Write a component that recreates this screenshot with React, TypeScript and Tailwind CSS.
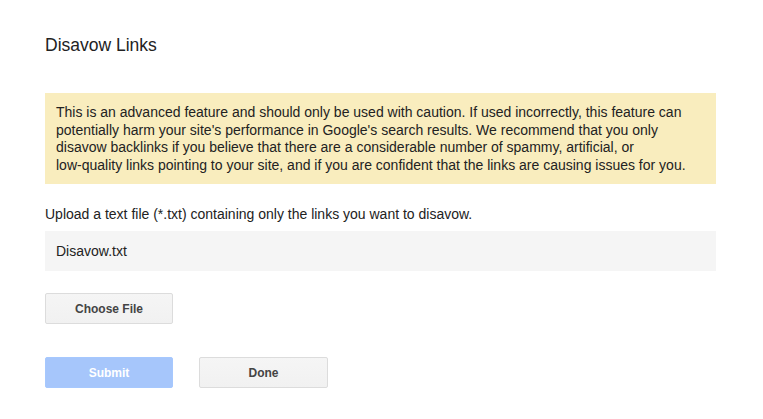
export default function App() {
  return (
    <div className="min-h-screen bg-white font-['Liberation_Sans',Arial,sans-serif] text-[#222]">
      <div className="ml-[45px] w-[671px] pt-[35px]">
        <h1 className="text-[17.5px] leading-[20px] text-[#222]">Disavow Links</h1>

        <div className="mt-[38px] bg-[#f9edbe] pl-[11px] pr-[8px] pt-[11px] pb-[10px] text-[14px] leading-[17.5px] text-[#222]">
          This is an advanced feature and should only be used with caution. If used incorrectly, this feature can
          <br />
          potentially harm your site's performance in Google's search results. We recommend that you only
          <br />
          disavow backlinks if you believe that there are a considerable number of spammy, artificial, or
          <br />
          low-quality links pointing to your site, and if you are confident that the links are causing issues for you.
        </div>

        <p className="mt-[22px] text-[14px] leading-[17px] text-[#222]">
          Upload a text file (*.txt) containing only the links you want to disavow.
        </p>

        <div className="mt-[8px] flex h-[40px] items-center bg-[#f5f5f5] px-[11px] text-[14px] text-[#222]">
          Disavow.txt
        </div>

        <button className="mt-[22px] block h-[31px] w-[128px] rounded-[2px] border border-[#dcdcdc] bg-gradient-to-b from-[#f5f5f5] to-[#f1f1f1] text-[12px] font-bold text-[#444]">
          Choose File
        </button>

        <div className="mt-[33px] flex gap-[26px]">
          <button className="h-[31px] w-[128px] rounded-[2px] border border-[#a6c8fe] bg-[#a6c6fb] text-[12px] font-bold text-white">
            Submit
          </button>
          <button className="h-[31px] w-[129px] rounded-[2px] border border-[#dcdcdc] bg-gradient-to-b from-[#f5f5f5] to-[#f1f1f1] text-[12px] font-bold text-[#444]">
            Done
          </button>
        </div>
      </div>
    </div>
  );
}
